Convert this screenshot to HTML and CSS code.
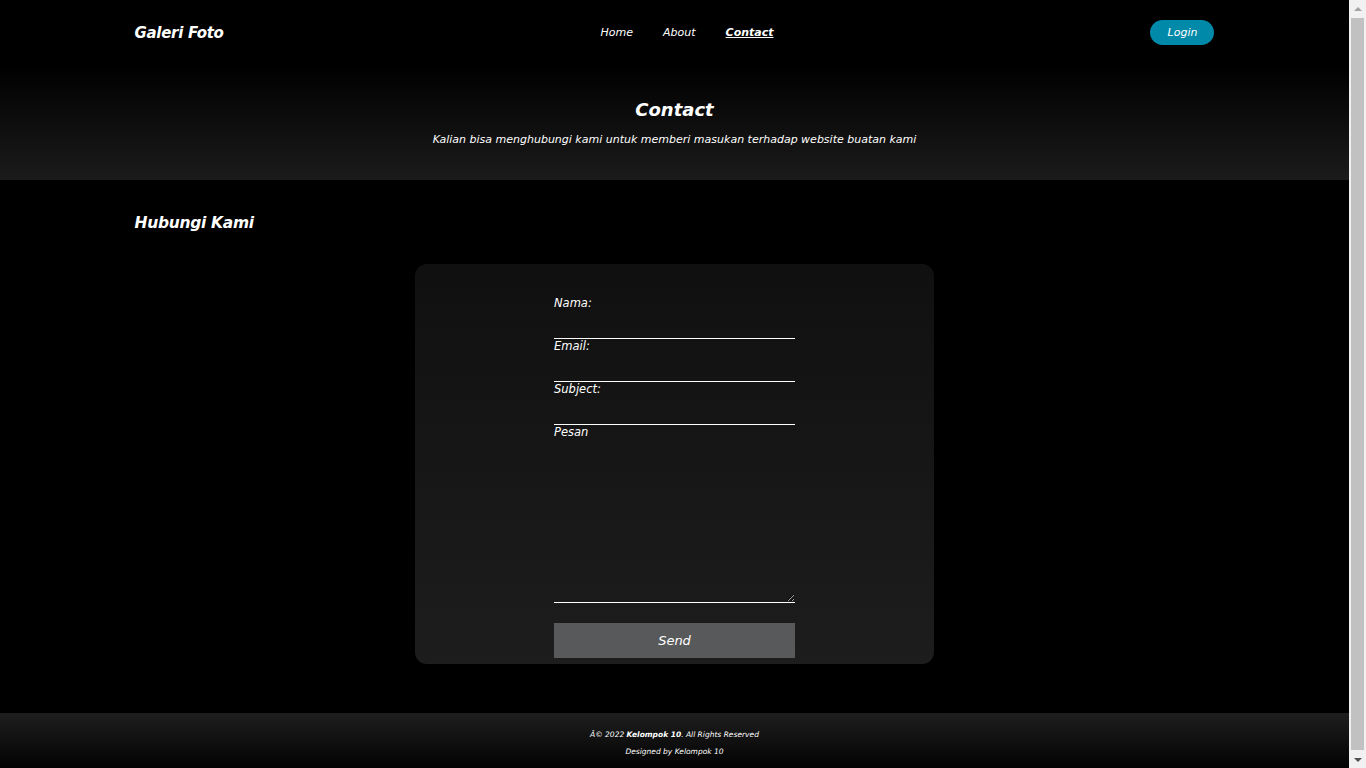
FILE: index.html
```html
<!DOCTYPE html>
<html lang="id">
<head>
<meta charset="utf-8">
<title>Contact - Galeri Foto</title>
<link rel="stylesheet" href="styles.css">
</head>
<body>
<header class="site-header">
  <nav class="navbar container">
    <a class="brand" href="#">Galeri Foto</a>
    <ul class="nav-links">
      <li><a href="#">Home</a></li>
      <li><a href="#">About</a></li>
      <li><a class="active" href="#">Contact</a></li>
    </ul>
    <a class="btn-login" href="#">Login</a>
  </nav>
  <div class="hero">
    <h1 class="hero-title">Contact</h1>
    <p class="hero-sub">Kalian bisa menghubungi kami untuk memberi masukan terhadap website buatan kami</p>
  </div>
</header>

<main class="content container">
  <h2 class="section-title">Hubungi Kami</h2>
  <div class="card">
    <form class="contact-form">
      <label class="field-label" for="nama">Nama:</label>
      <input class="field-input" id="nama" type="text">
      <label class="field-label" for="email">Email:</label>
      <input class="field-input" id="email" type="email">
      <label class="field-label" for="subject">Subject:</label>
      <input class="field-input" id="subject" type="text">
      <label class="field-label" for="pesan">Pesan</label>
      <textarea class="field-area" id="pesan"></textarea>
      <button class="btn-send" type="button">Send</button>
    </form>
  </div>
</main>

<footer class="site-footer">
  <p class="copy">Â© 2022 <strong>Kelompok 10</strong>. All Rights Reserved</p>
  <p class="credit">Designed by Kelompok 10</p>
</footer>

<div class="fake-scrollbar" aria-hidden="true">
  <span class="sb-arrow sb-up"></span>
  <span class="sb-thumb"></span>
  <span class="sb-arrow sb-down"></span>
</div>
</body>
</html>
```
FILE: styles.css
```css
* { box-sizing: border-box; }
html, body { margin: 0; padding: 0; }
html { scrollbar-width: none; }
::-webkit-scrollbar { display: none; }
body {
  background: #000;
  color: #fff;
  font-family: "DejaVu Sans", sans-serif;
  font-style: italic;
  padding-right: 17px;
}
.container {
  width: 1080px;
  margin: 0 auto;
}
a { color: #fff; text-decoration: none; }

.site-header {
  background: linear-gradient(to bottom, #000 0px, #000 65px, #1b1b1b 180px);
}
.navbar {
  height: 65px;
  display: flex;
  align-items: center;
  justify-content: space-between;
}
.brand {
  font-size: 15px;
  font-weight: bold;
  letter-spacing: -0.3px;
}
.nav-links {
  list-style: none;
  margin: 0;
  padding: 0;
  display: flex;
  gap: 30px;
  font-size: 11px;
}
.nav-links .active {
  font-weight: bold;
  text-decoration: underline;
}
.btn-login {
  width: 64px;
  height: 25px;
  border-radius: 13px;
  background: #0089a8;
  display: flex;
  align-items: center;
  justify-content: center;
  font-size: 11px;
}
.hero {
  height: 115px;
  text-align: center;
  padding-top: 33px;
}
.hero-title {
  margin: 0;
  font-size: 18px;
  font-weight: bold;
  line-height: 24px;
}
.hero-sub {
  margin: 11px 0 0;
  font-size: 11px;
  line-height: 14px;
}

.content {
  padding-top: 33px;
  padding-bottom: 49px;
}
.section-title {
  margin: 0;
  font-size: 15.5px;
  font-weight: bold;
  line-height: 20px;
  letter-spacing: -0.3px;
}
.card {
  width: 519px;
  height: 400px;
  margin: 31px auto 0;
  border-radius: 12px;
  background: linear-gradient(to bottom, #101010, #1d1d1d);
  padding-top: 32px;
}
.contact-form {
  width: 241px;
  margin: 0 auto;
  display: flex;
  flex-direction: column;
}
.field-label {
  font-size: 11.5px;
  line-height: 14px;
  height: 14px;
}
.field-input, .field-area {
  background: transparent;
  border: none;
  border-bottom: 1px solid #fff;
  color: #fff;
  font-family: inherit;
  outline: none;
  padding: 0;
}
.field-input {
  height: 29px;
}
.field-area {
  height: 164px;
  resize: vertical;
}
.btn-send {
  margin-top: 20px;
  height: 35px;
  border: none;
  background: #58595b;
  color: #fff;
  font-family: inherit;
  font-style: italic;
  font-size: 13px;
}

.site-footer {
  height: 61px;
  background: linear-gradient(to bottom, #1e1e1e, #000);
  text-align: center;
  padding-top: 17px;
  font-size: 7.5px;
}
.site-footer p { margin: 0; line-height: 10px; }
.site-footer .credit { margin-top: 7px; }
.site-footer strong { font-weight: bold; }

/* window scrollbar chrome, drawn over the right edge */
.fake-scrollbar {
  position: fixed;
  top: 0;
  right: 0;
  width: 17px;
  height: 100vh;
  background: #f1f1f1;
  display: flex;
  flex-direction: column;
  align-items: center;
}
.sb-arrow {
  flex: 0 0 17px;
  width: 17px;
  display: flex;
  align-items: center;
  justify-content: center;
}
.sb-arrow::before {
  content: "";
  width: 0;
  height: 0;
  border-left: 4px solid transparent;
  border-right: 4px solid transparent;
}
.sb-up::before { border-bottom: 4px solid #a3a3a3; }
.sb-down::before { border-top: 4px solid #505050; }
.sb-thumb {
  flex: 1;
  width: 13px;
  margin: 1px 0;
  background: #c1c1c1;
}
```
